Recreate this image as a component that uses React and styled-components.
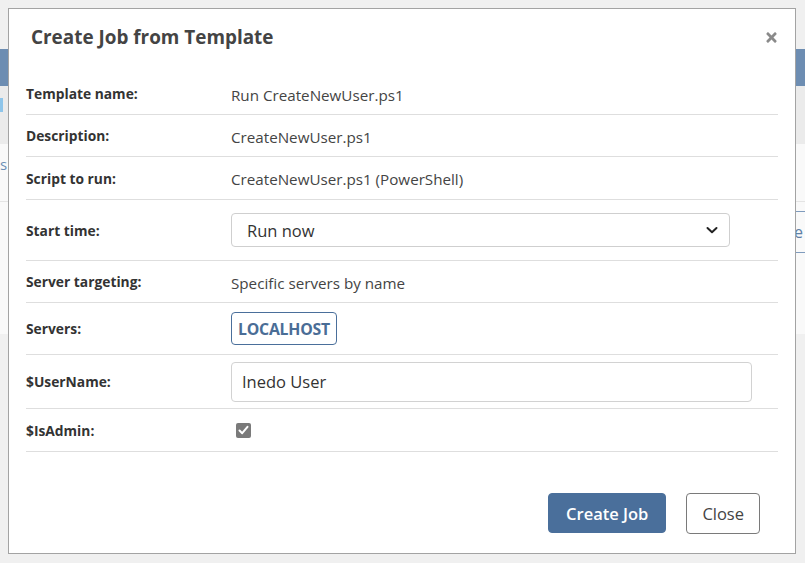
import React from "react";
import styled, { createGlobalStyle } from "styled-components";
import { FaTimes } from "react-icons/fa";

const GlobalStyle = createGlobalStyle`
  html, body {
    margin: 0;
    padding: 0;
    background: #f0f0f0;
    font-family: "Open Sans", "Liberation Sans", sans-serif;
  }
  * {
    box-sizing: border-box;
  }
`;

const BLUE = "#4a6f9b";

/* page behind the dialog */
const Page = styled.div`
  position: relative;
  width: 805px;
  height: 563px;
  overflow: hidden;
  display: flex;
  flex-direction: column;
`;

const TopStrip = styled.div`
  height: 49px;
  background: #f0f0f0;
`;

const NavBar = styled.div`
  height: 37px;
  background: #6d8db2;
`;

const SubNav = styled.div`
  height: 58px;
  background: #ebebeb;
  padding-top: 12px;
`;

const TabMark = styled.div`
  width: 3px;
  height: 14px;
  background: #8ec5ea;
`;

const Content = styled.div`
  background: #f9f9f9;
  height: 190px;
  display: flex;
  flex-direction: column;
`;

const ContentRow = styled.div`
  height: 58px;
  border-bottom: 1px solid #e4e4e4;
  padding-top: 10px;
  color: #6b8fb5;
  font-size: 15px;
`;

const ToolRow = styled.div`
  display: flex;
  justify-content: flex-end;
  padding-top: 9px;
`;

const ToolButton = styled.div`
  width: 12px;
  height: 42px;
  border-top: 1px solid #7f9bbd;
  border-bottom: 1px solid #7f9bbd;
  color: #5d7fa6;
  font-size: 16px;
  display: flex;
  align-items: center;
  padding-left: 1px;
`;

/* dialog */
const Dialog = styled.div`
  position: absolute;
  left: 8px;
  top: 8px;
  width: 788px;
  height: 546px;
  background: #fff;
  border: 1px solid #a3a3a3;
  display: flex;
  flex-direction: column;
`;

const Header = styled.div`
  height: 64px;
  display: flex;
  justify-content: space-between;
  align-items: flex-start;
  padding: 15px 16px 0 22px;
`;

const Title = styled.h2`
  margin: 0;
  font-size: 18.9px;
  line-height: 26px;
  font-weight: 700;
  color: #444;
`;

const CloseX = styled.button`
  border: 0;
  background: none;
  padding: 0;
  margin-top: 6px;
  color: #8a8a8a;
  display: flex;
  font-size: 15px;
`;

const Body = styled.div`
  padding: 0 17px;
  display: flex;
  flex-direction: column;
`;

const Row = styled.div`
  height: ${({ $h }) => $h}px;
  border-bottom: 1px solid #dedede;
  display: grid;
  grid-template-columns: 205px 1fr;
  align-items: center;
`;

const Label = styled.div`
  font-size: 13.8px;
  font-weight: 700;
  color: #333;
`;

const Value = styled.div`
  font-size: 15.2px;
  color: #444;
  padding-top: 2px;
`;

const SelectWrap = styled.div`
  position: relative;
  width: 499px;
`;

const Select = styled.select`
  appearance: none;
  width: 100%;
  height: 34px;
  border: 1px solid #cfcfcf;
  border-radius: 4px;
  background: #fff;
  padding: 0 36px 0 15px;
  font-family: inherit;
  font-size: 16.5px;
  color: #333;
`;

const Chevron = styled.svg`
  position: absolute;
  right: 12px;
  top: 12px;
  pointer-events: none;
`;

const ServerTag = styled.span`
  display: inline-flex;
  align-items: center;
  justify-content: center;
  width: 106px;
  height: 33px;
  border: 1px solid ${BLUE};
  border-radius: 4px;
  color: #4a6d96;
  font-size: 15.8px;
  font-weight: 700;
  letter-spacing: -0.2px;
`;

const TextInput = styled.input`
  width: 521px;
  height: 40px;
  border: 1px solid #d2d2d2;
  border-radius: 4px;
  padding: 0 10px;
  font-family: inherit;
  font-size: 16.5px;
  color: #333;
  outline: none;
`;

const Check = styled.span`
  width: 15px;
  height: 15px;
  margin-left: 5px;
  border-radius: 2px;
  background: #7a7a7a;
  display: flex;
  align-items: center;
  justify-content: center;
`;

const Footer = styled.div`
  flex: 1;
  display: flex;
  justify-content: flex-end;
  align-items: flex-start;
  gap: 20px;
  padding: 41px 35px 0 0;
`;

const Button = styled.button`
  height: ${({ $primary }) => ($primary ? 40 : 41)}px;
  padding: 0 ${({ $primary }) => ($primary ? 17 : 15)}px;
  border-radius: 4px;
  border: 1px solid ${({ $primary }) => ($primary ? BLUE : "#7a7a7a")};
  background: ${({ $primary }) => ($primary ? BLUE : "#fff")};
  color: ${({ $primary }) => ($primary ? "#fff" : "#444")};
  font-family: inherit;
  font-size: ${({ $primary }) => ($primary ? 16.5 : 16.5)}px;
  font-weight: ${({ $primary }) => ($primary ? 600 : 400)};
`;

const fields = [
  { label: "Template name:", h: 42, value: "Run CreateNewUser.ps1" },
  { label: "Description:", h: 42, value: "CreateNewUser.ps1" },
  { label: "Script to run:", h: 43, value: "CreateNewUser.ps1 (PowerShell)" },
];

const App = () => {
  return (
    <>
      <GlobalStyle />
      <Page>
        <TopStrip />
        <NavBar />
        <SubNav>
          <TabMark />
        </SubNav>
        <Content>
          <ContentRow>s</ContentRow>
          <ToolRow>
            <ToolButton>e</ToolButton>
          </ToolRow>
        </Content>

        <Dialog>
          <Header>
            <Title>Create Job from Template</Title>
            <CloseX aria-label="Close">
              <FaTimes />
            </CloseX>
          </Header>
          <Body>
            {fields.map((f) => (
              <Row key={f.label} $h={f.h}>
                <Label>{f.label}</Label>
                <Value>{f.value}</Value>
              </Row>
            ))}
            <Row $h={61}>
              <Label>Start time:</Label>
              <SelectWrap>
                <Select defaultValue="now">
                  <option value="now">Run now</option>
                  <option value="later">Schedule</option>
                </Select>
                <Chevron width="12" height="10" viewBox="0 0 12 10">
                  <path d="M1.5 3 L6 7.2 L10.5 3" fill="none" stroke="#222" strokeWidth="2" strokeLinecap="round" strokeLinejoin="round" />
                </Chevron>
              </SelectWrap>
            </Row>
            <Row $h={42}>
              <Label>Server targeting:</Label>
              <Value>Specific servers by name</Value>
            </Row>
            <Row $h={52}>
              <Label>Servers:</Label>
              <div>
                <ServerTag>LOCALHOST</ServerTag>
              </div>
            </Row>
            <Row $h={54}>
              <Label>$UserName:</Label>
              <TextInput defaultValue="Inedo User" />
            </Row>
            <Row $h={43}>
              <Label>$IsAdmin:</Label>
              <Check>
                <svg width="11" height="10" viewBox="0 0 11 10">
                  <path d="M1.5 5.5 L4.2 8.2 L9.5 1.8" fill="none" stroke="#fff" strokeWidth="2" strokeLinecap="round" strokeLinejoin="round" />
                </svg>
              </Check>
            </Row>
          </Body>
          <Footer>
            <Button $primary>Create Job</Button>
            <Button>Close</Button>
          </Footer>
        </Dialog>
      </Page>
    </>
  );
};

export default App;
